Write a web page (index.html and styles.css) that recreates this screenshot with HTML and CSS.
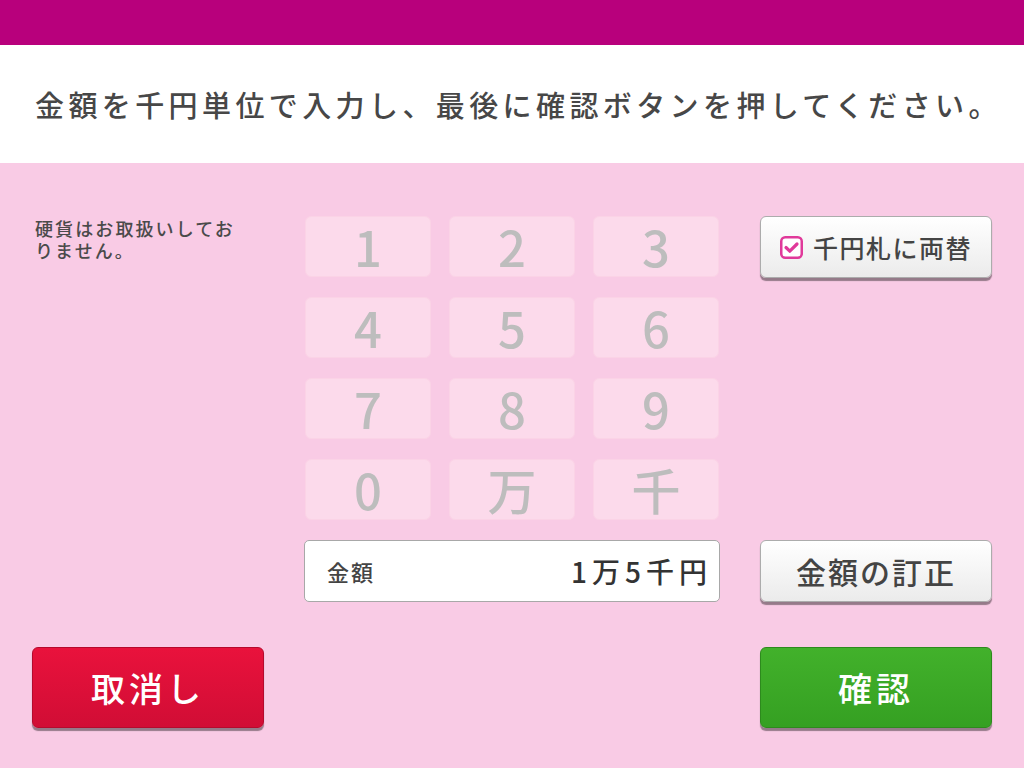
FILE: index.html
```html
<!DOCTYPE html>
<html lang="ja">
<head>
    <meta charset="UTF-8">
    <meta name="viewport" content="width=device-width, initial-scale=1.0">
    <title>金額入力</title>
    <link rel="stylesheet" href="styles.css">
</head>
<body>
    <div class="topbar"></div>
    <div class="guide">金額を千円単位で入力し、最後に確認ボタンを押してください。</div>

    <div class="main">
        <div class="entry">
            <p class="note">硬貨はお取扱いしておりません。</p>

            <div class="keypad">
                <div class="key">1</div>
                <div class="key">2</div>
                <div class="key">3</div>
                <div class="key">4</div>
                <div class="key">5</div>
                <div class="key">6</div>
                <div class="key">7</div>
                <div class="key">8</div>
                <div class="key">9</div>
                <div class="key">0</div>
                <div class="key">万</div>
                <div class="key">千</div>
            </div>

            <button class="btn btn-white btn-exchange">
                <svg class="check" width="23" height="23" viewBox="0 0 23 23">
                    <rect x="1.25" y="1.25" width="20.5" height="20.5" rx="4" fill="#fff" stroke="#e0399a" stroke-width="2.5"/>
                    <path d="M6 11.5 L9.8 15.2 L17 8" fill="none" stroke="#e0399a" stroke-width="3.2" stroke-linecap="round" stroke-linejoin="round"/>
                </svg>
                千円札に両替
            </button>

            <div class="amount">
                <span class="amount-label">金額</span>
                <span class="amount-value">1万5千円</span>
            </div>

            <button class="btn btn-white btn-fix">金額の訂正</button>
        </div>

        <div class="actions">
            <button class="btn btn-big btn-cancel">取消し</button>
            <button class="btn btn-big btn-ok">確認</button>
        </div>
    </div>
</body>
</html>
```

FILE: styles.css
```css
body {
    margin: 0;
    width: 1024px;
    height: 768px;
    overflow: hidden;
    font-family: "Noto Sans CJK JP", "Noto Sans", sans-serif;
    background-color: #f9cbe5;
    color: #444;
}
.topbar {
    height: 45px;
    background-color: #b8007c;
}
.guide {
    height: 118px;
    display: flex;
    align-items: center;
    padding-left: 35px;
    background-color: #fff;
    font-size: 29px;
    font-weight: 500;
    letter-spacing: 4.4px;
    color: #474747;
}
.main {
    padding: 53px 32px 0;
}
.entry {
    display: grid;
    grid-template-columns: 273px 414px 1fr;
    row-gap: 20px;
    align-items: start;
}
.note {
    margin: 1px 0 0 3px;
    width: 212px;
    font-size: 18px;
    line-height: 22px;
    font-weight: 500;
    letter-spacing: 2.1px;
    color: #4a4a4a;
}
.keypad {
    display: grid;
    grid-template-columns: repeat(3, 126px);
    grid-auto-rows: 61px;
    column-gap: 18px;
    row-gap: 20px;
}
.key {
    box-sizing: border-box;
    display: flex;
    align-items: center;
    justify-content: center;
    padding-bottom: 3px;
    background-color: #fcdaeb;
    border: 1px solid #fbd3e6;
    border-radius: 6px;
    font-size: 49px;
    font-weight: 500;
    color: #bdbdbd;
}
.btn {
    box-sizing: border-box;
    display: flex;
    align-items: center;
    justify-content: center;
    font-family: inherit;
    border-radius: 6px;
    cursor: pointer;
    padding: 0;
}
.btn-white {
    justify-self: end;
    width: 232px;
    background: linear-gradient(#ffffff, #ebebeb);
    border: 1px solid #acacac;
    box-shadow: 0 3px 1px rgba(0, 0, 0, 0.4);
    color: #444;
    font-weight: 500;
}
.btn-exchange {
    height: 62px;
    font-size: 25px;
    letter-spacing: 1.5px;
}
.check {
    margin-right: 10px;
}
.btn-fix {
    height: 62px;
    font-size: 30px;
    letter-spacing: 2px;
}
.amount {
    grid-column: 2;
    box-sizing: border-box;
    width: 416px;
    height: 62px;
    margin-left: -1px;
    display: flex;
    align-items: center;
    justify-content: space-between;
    padding: 0 7px 0 22px;
    background-color: #fff;
    border: 1px solid #a8a8a8;
    border-radius: 5px;
}
.amount-label {
    font-size: 22px;
    font-weight: 500;
    letter-spacing: 2px;
    color: #444;
}
.amount-value {
    font-size: 28px;
    font-weight: 500;
    letter-spacing: 5px;
    color: #333;
}
.actions {
    display: flex;
    justify-content: space-between;
    margin-top: 45px;
}
.btn-big {
    width: 232px;
    height: 81px;
    font-size: 34px;
    font-weight: 500;
    letter-spacing: 4px;
    color: #fff;
    box-shadow: 0 3px 1px rgba(0, 0, 0, 0.4);
}
.btn-cancel {
    background: linear-gradient(#e9123c, #d10d35);
    border: 1px solid #b50a2d;
}
.btn-ok {
    background: linear-gradient(#42b12b, #35a022);
    border: 1px solid #2d8a1d;
}
```
